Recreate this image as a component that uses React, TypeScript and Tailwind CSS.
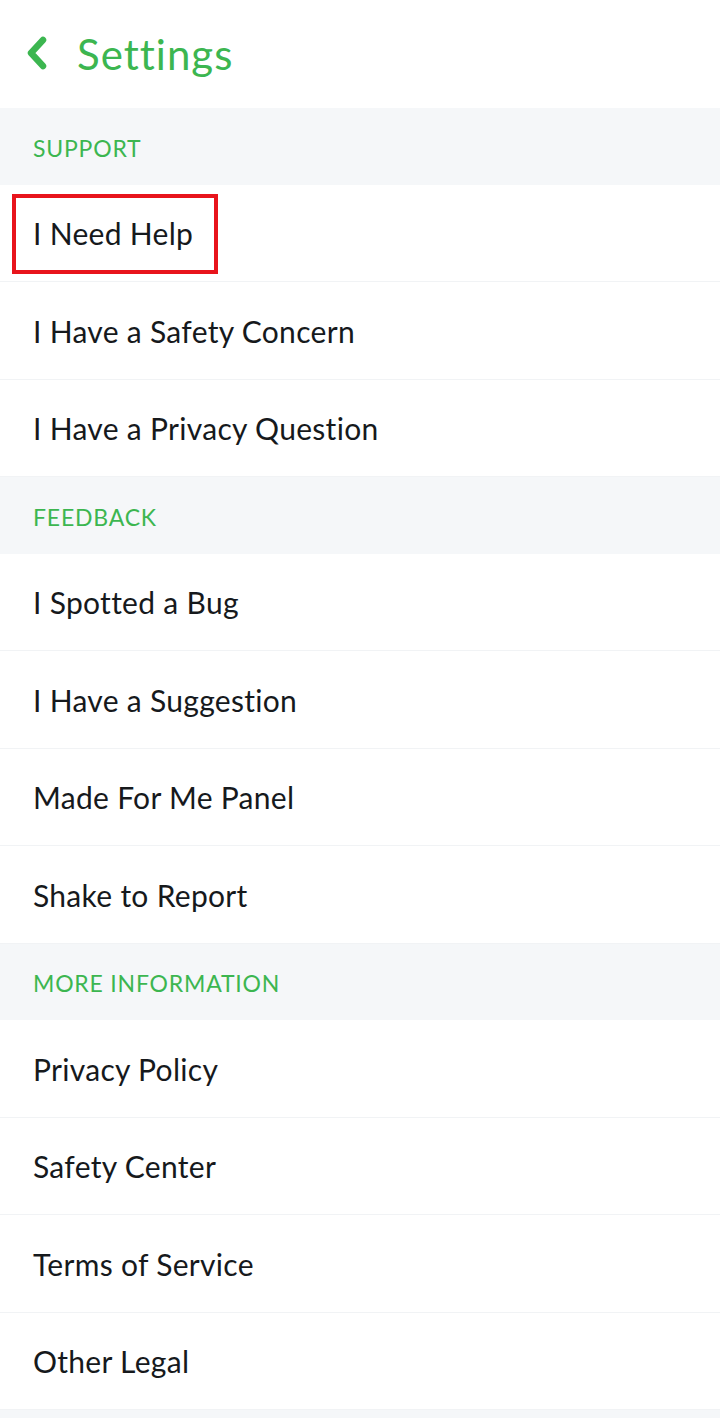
const sections = [
  {
    title: 'SUPPORT',
    items: ['I Need Help', 'I Have a Safety Concern', 'I Have a Privacy Question'],
  },
  {
    title: 'FEEDBACK',
    items: ['I Spotted a Bug', 'I Have a Suggestion', 'Made For Me Panel', 'Shake to Report'],
  },
  {
    title: 'MORE INFORMATION',
    items: ['Privacy Policy', 'Safety Center', 'Terms of Service', 'Other Legal'],
  },
];

const Row = ({ label, highlight }: { label: string; highlight?: boolean }) => (
  <div className="flex h-[97.5px] items-center border-b border-[#f1f3f5] bg-white pl-[33px] pt-[2px]">
    {highlight ? (
      <span className="-ml-[21px] flex h-[80px] items-center border-4 border-[#e8141c] pl-[17px] pr-[21px]">
        {label}
      </span>
    ) : (
      <span>{label}</span>
    )}
  </div>
);

export default function App() {
  return (
    <div
      className="min-h-[1418px] w-[720px] bg-white text-[30px] tracking-[0.3px] text-[#16191c]"
      style={{ fontFamily: 'Lato, "Noto Sans", sans-serif' }}
    >
      <header className="flex h-[108px] items-center gap-[29px] pl-[26px] text-[#3cb650]">
        <svg width="22" height="34" viewBox="0 0 22 34" fill="none" className="mb-[3px]">
          <path d="M17 4 L5 17 L17 30" stroke="currentColor" strokeWidth="6.5" strokeLinecap="round" strokeLinejoin="round" />
        </svg>
        <h1 className="text-[42px] leading-none tracking-[1px]">Settings</h1>
      </header>

      {sections.map((s, si) => (
        <section key={s.title}>
          <div className="flex h-[76.5px] items-center bg-[#f5f7f9] pl-[33px] pt-[3px] text-[23px] tracking-[0.8px] text-[#3cb650]">
            {s.title}
          </div>
          {s.items.map((item, i) => (
            <Row key={item} label={item} highlight={si === 0 && i === 0} />
          ))}
        </section>
      ))}
      <div className="h-[8px] bg-[#f5f7f9]" />
    </div>
  );
}
